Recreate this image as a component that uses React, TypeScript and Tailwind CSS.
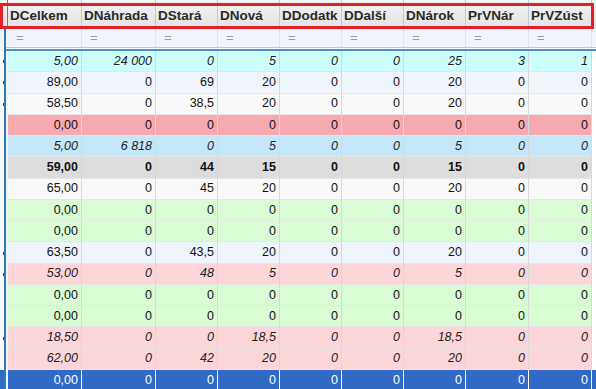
import React from "react";

type Row = {
  values: string[];
  bg: string;
  style?: "italic" | "bold" | "selected";
  mark?: boolean;
};

const columns = [
  { name: "DCelkem", width: "w-[74px]" },
  { name: "DNáhrada", width: "w-[74px]" },
  { name: "DStará", width: "w-[62px]" },
  { name: "DNová", width: "w-[62px]" },
  { name: "DDodatk", width: "w-[62px]" },
  { name: "DDalší", width: "w-[62px]" },
  { name: "DNárok", width: "w-[62px]" },
  { name: "PrVNár", width: "w-[63px]" },
  { name: "PrVZúst", width: "w-[63px]" },
];

const zeros = ["0,00", "0", "0", "0", "0", "0", "0", "0", "0"];

const rows: Row[] = [
  { values: ["5,00", "24 000", "0", "5", "0", "0", "25", "3", "1"], bg: "bg-[#ccfefe]", style: "italic", mark: true },
  { values: ["89,00", "0", "69", "20", "0", "0", "20", "0", "0"], bg: "bg-[#f0f5fb]", mark: true },
  { values: ["58,50", "0", "38,5", "20", "0", "0", "20", "0", "0"], bg: "bg-[#f9f9f9]", mark: true },
  { values: zeros, bg: "bg-[#f7a9b1]" },
  { values: ["5,00", "6 818", "0", "5", "0", "0", "5", "0", "0"], bg: "bg-[#c5e7fa]", style: "italic" },
  { values: ["59,00", "0", "44", "15", "0", "0", "15", "0", "0"], bg: "bg-[#dddddd]", style: "bold" },
  { values: ["65,00", "0", "45", "20", "0", "0", "20", "0", "0"], bg: "bg-[#f9f9f9]" },
  { values: zeros, bg: "bg-[#d9fcd5]" },
  { values: zeros, bg: "bg-[#d9fcd5]" },
  { values: ["63,50", "0", "43,5", "20", "0", "0", "20", "0", "0"], bg: "bg-[#eef4fc]", mark: true },
  { values: ["53,00", "0", "48", "5", "0", "0", "5", "0", "0"], bg: "bg-[#fdd6da]", style: "italic", mark: true },
  { values: zeros, bg: "bg-[#d9fcd5]" },
  { values: zeros, bg: "bg-[#d9fcd5]" },
  { values: ["18,50", "0", "0", "18,5", "0", "0", "18,5", "0", "0"], bg: "bg-[#fdd6da]", style: "italic", mark: true },
  { values: ["62,00", "0", "42", "20", "0", "0", "20", "0", "0"], bg: "bg-[#fdd6da]", style: "italic" },
  { values: zeros, bg: "bg-[#316ac5]", style: "selected" },
];

function DataRow({ row }: { row: Row }) {
  const selected = row.style === "selected";
  const textClass =
    row.style === "italic"
      ? "italic text-[#222]"
      : row.style === "bold"
      ? "font-bold text-[#111]"
      : selected
      ? "text-white"
      : "text-[#111]";
  return (
    <div className={`flex h-[21.27px] shrink-0 ${row.bg}`}>
      {/* clipped edge of the previous column */}
      <div className={`w-[4px] flex items-center justify-end ${selected ? "bg-[#316ac5]" : "bg-[#fafafa]"}`}>
        {row.mark && <div className="w-[1px] h-[3px] bg-[#333]" />}
      </div>
      <div className="w-[2px] bg-[#2a7cbf]" />
      <div className="w-[2px] bg-[#eef4fb]" />
      {columns.map((c, i) => (
        <div
          key={c.name}
          className={`${c.width} shrink-0 border-r border-b ${
            selected ? "border-r-white border-b-[#316ac5]" : "border-r-[#d8d8d8] border-b-[#e6e6e6]"
          } flex items-center justify-end pr-[3px] text-[12.5px] ${textClass}`}
        >
          {row.values[i]}
        </div>
      ))}
      <div className={`flex-1 ${selected ? "bg-[#316ac5]" : "bg-white"}`} />
    </div>
  );
}

export default function App() {
  return (
    <div className="relative w-[596px] h-[389px] overflow-hidden bg-white font-['Liberation_Sans',Arial,sans-serif]">
      {/* header */}
      <div className="flex h-[29px] bg-gradient-to-b from-[#f4f4f4] to-[#e2e2e2]">
        <div className="w-[8px] border-r border-r-[#3b88c8]" />
        {columns.map((c) => (
          <div
            key={c.name}
            className={`${c.width} shrink-0 border-r border-r-[#b9cde0] flex items-center pl-[2px] pt-[4px] text-[13.5px] font-bold text-[#2a2a2a]`}
          >
            {c.name}
          </div>
        ))}
        <div className="flex-1" />
      </div>

      {/* filter row */}
      <div className="flex h-[18px] bg-[#f1f5fb]">
        <div className="w-[4px] bg-[#f3f3f3]" />
        <div className="w-[2px] bg-[#2a7cbf]" />
        <div className="w-[2px]" />
        {columns.map((c) => (
          <div
            key={c.name}
            className={`${c.width} shrink-0 border-r border-r-[#dde4ee] flex items-center pl-[8px] text-[13px] text-[#8d9db3]`}
          >
            =
          </div>
        ))}
        <div className="flex-1" />
      </div>

      {/* divider */}
      <div className="flex h-[4px]">
        <div className="w-[4px] bg-[#f3f3f3]" />
        <div className="w-[2px] bg-[#2a7cbf]" />
        <div className="flex-1 border-t border-t-[#b7c9dc] border-b-2 border-b-[#4a8fcd] bg-white" />
      </div>

      {/* rows */}
      <div className="flex flex-col">
        {rows.map((r, i) => (
          <DataRow key={i} row={r} />
        ))}
      </div>

      {/* red highlight */}
      <div className="pointer-events-none absolute left-0 top-[3px] w-[594px] h-[26px] border-[3px] border-[#e2222b]" />
    </div>
  );
}
